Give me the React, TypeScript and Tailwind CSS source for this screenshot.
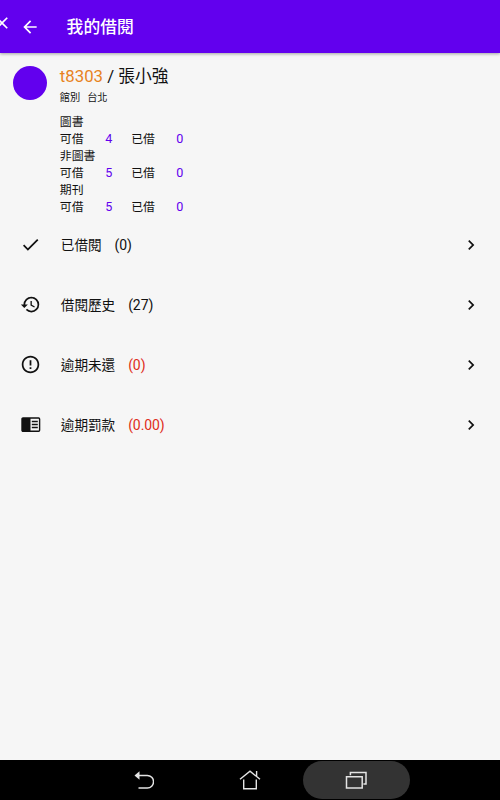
import * as React from "react";
import { MdArrowBack, MdCheck, MdChevronRight, MdClose, MdErrorOutline, MdHistory } from "react-icons/md";

function ReaderIcon({ size, className }: { size: number; className?: string }) {
    return (
        <svg width={size} height={size} viewBox="0 0 21 21" className={className}>
            <rect x="2" y="4" width="17.6" height="13.2" rx="1" fill="none" stroke="currentColor" strokeWidth="1.4" />
            <path d="M2 4H10.5V17.2H2Z" fill="currentColor" />
            <path d="M11.8 7.5H17.8M11.8 10.5H17.8M11.8 13.5H17.8" stroke="currentColor" strokeWidth="1.4" />
        </svg>
    );
}

const quotas = [
    { name: "圖書", available: 4, borrowed: 0 },
    { name: "非圖書", available: 5, borrowed: 0 },
    { name: "期刊", available: 5, borrowed: 0 },
];

const menu = [
    { label: "已借閱", count: "(0)", icon: MdCheck, alert: false },
    { label: "借閱歷史", count: "(27)", icon: MdHistory, alert: false },
    { label: "逾期未還", count: "(0)", icon: MdErrorOutline, alert: true },
    { label: "逾期罰款", count: "(0.00)", icon: ReaderIcon, alert: true },
];

function Header() {
    return (
        <header className="relative z-10 flex h-[53px] shrink-0 items-center bg-[#6200ee] text-white shadow-[0_1px_3px_rgba(0,0,0,0.35)]">
            <MdClose size={20} className="-ml-[8px] mb-[7px] shrink-0" />
            <MdArrowBack size={20} className="ml-[8px] shrink-0" />
            <h1 className="ml-[26.6px] text-[16.8px] leading-[24px] font-medium">我的借閱</h1>
        </header>
    );
}

function Profile() {
    return (
        <section className="flex h-[162px] shrink-0 pl-[13px] pt-[13px]">
            <div className="size-[34px] shrink-0 rounded-full bg-[#6200ee]" />
            <div className="ml-[12.8px]">
                <div className="text-[16.8px] leading-[21px]">
                    <span className="text-[#e8831e]">t8303</span> / 張小強
                </div>
                <div className="mt-px flex gap-[7px] text-[10.2px] leading-[20px]">
                    <span>館別</span>
                    <span>台北</span>
                </div>
                <div className="mt-[6px] text-[11.9px] leading-[16.9px]">
                    {quotas.map((q) => (
                        <div key={q.name}>
                            <div>{q.name}</div>
                            <div className="flex">
                                <span className="w-[45.4px]">可借</span>
                                <span className="w-[26px] text-[12.6px] text-[#6200ee]">{q.available}</span>
                                <span className="w-[45px]">已借</span>
                                <span className="text-[12.6px] text-[#6200ee]">{q.borrowed}</span>
                            </div>
                        </div>
                    ))}
                </div>
            </div>
        </section>
    );
}

function NavBar() {
    return (
        <nav className="flex h-[40px] shrink-0 items-center justify-center bg-black text-[#e4e4e4]">
            <div className="flex w-[106px] justify-center">
                <svg width="20" height="20" viewBox="0 0 20 20" fill="none">
                    <path d="M4 5.5H13.3A6.2 6.2 0 0 1 13.3 18H4.5" stroke="currentColor" strokeWidth="1.5" />
                    <path d="M0.5 5.5L5.5 1.2V9.8Z" fill="currentColor" />
                </svg>
            </div>
            <div className="flex w-[106px] justify-center">
                <svg width="22" height="20" viewBox="0 0 22 20" fill="none" stroke="currentColor" strokeWidth="1.4">
                    <path d="M1 9.3L11 1.2L21 9.3M17.6 6.4V1M4.7 9.5V18.8H17.3V9.5" />
                </svg>
            </div>
            <div className="flex h-[38px] w-[107px] items-center justify-center rounded-full bg-[#333333]">
                <svg width="22" height="18" viewBox="0 0 22 18" fill="none" stroke="currentColor" strokeWidth="1.5">
                    <path d="M1.5 5.8H17.2V17H1.5ZM5.4 4.2V1.4H21V13H18.4" />
                </svg>
            </div>
        </nav>
    );
}

export default function App() {
    return (
        <div className="flex h-[800px] w-[500px] flex-col overflow-hidden bg-[#f6f6f6] font-[Roboto,'Noto_Sans_CJK_TC',sans-serif] text-[#111111]">
            <Header />
            <Profile />
            <main className="flex-1">
                {menu.map((item) => (
                    <div key={item.label} className="flex h-[60px] items-center pl-[20px] pr-[19px]">
                        <item.icon size={21} className="mb-px shrink-0" />
                        <span className="ml-[19.8px] text-[13.6px] leading-[20px]">{item.label}</span>
                        <span
                            className={
                                item.alert
                                    ? "ml-[13px] text-[14px] tracking-[-0.1px] text-[#df2c20]"
                                    : "ml-[13px] text-[14px] tracking-[-0.1px]"
                            }
                        >
                            {item.count}
                        </span>
                        <MdChevronRight size={20} className="ml-auto shrink-0" />
                    </div>
                ))}
            </main>
            <NavBar />
        </div>
    );
}
